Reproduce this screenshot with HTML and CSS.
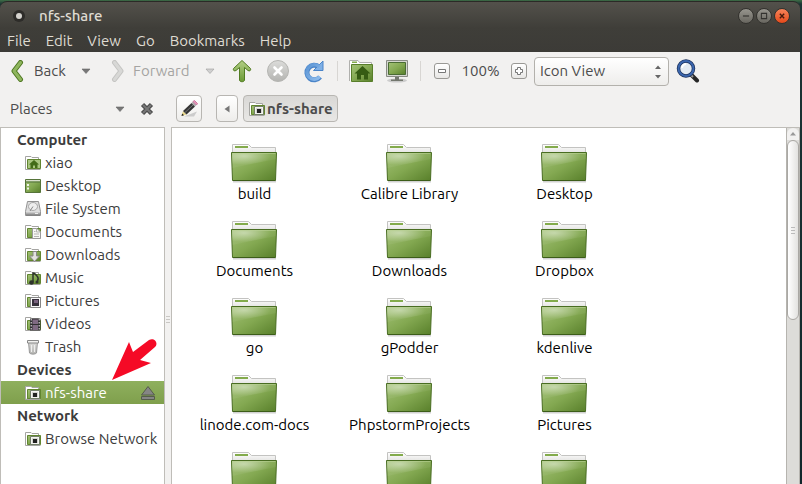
FILE: index.html
```html
<!DOCTYPE html>
<html lang="en">
<head>
<meta charset="utf-8">
<title>nfs-share</title>
<link rel="stylesheet" href="styles.css">
</head>
<body>
<svg class="defs" aria-hidden="true">
  <defs>
    <linearGradient id="green" x1="0" y1="0" x2="1" y2="1"><stop offset="0" stop-color="#a3c276"/><stop offset=".5" stop-color="#83a851"/><stop offset="1" stop-color="#587f2a"/></linearGradient>
    <linearGradient id="arrowGreen" x1="0" y1="0" x2="0" y2="1"><stop offset="0" stop-color="#b3cf86"/><stop offset="1" stop-color="#6b9a35"/></linearGradient>
    <linearGradient id="paper" x1="0" y1="0" x2="0" y2="1"><stop offset="0" stop-color="#fff"/><stop offset="1" stop-color="#e4e4e2"/></linearGradient>
    <linearGradient id="grey" x1="0" y1="0" x2="0" y2="1"><stop offset="0" stop-color="#dcdcda"/><stop offset="1" stop-color="#b4b4b1"/></linearGradient>
    <linearGradient id="blue" x1="0" y1="0" x2="1" y2="1"><stop offset="0" stop-color="#5a94d4"/><stop offset="1" stop-color="#8fbcec"/></linearGradient>
    <linearGradient id="metal" x1="0" y1="0" x2="0" y2="1"><stop offset="0" stop-color="#d5d5d5"/><stop offset="1" stop-color="#747474"/></linearGradient>
    <radialGradient id="shine" cx=".28" cy=".2" r=".6"><stop offset="0" stop-color="#fff" stop-opacity=".45"/><stop offset="1" stop-color="#fff" stop-opacity=".05"/></radialGradient>
  </defs>
  <symbol id="folder" viewBox="0 0 48 40">
    <path d="M3 38.500h43" stroke="#000" stroke-opacity=".18" stroke-width="2"/>
    <path d="M2.500 10V1.500h16l3 3h24V10z" fill="url(#paper)" stroke="#c3c3c1"/>
    <path d="M5 3h13v2H5z" fill="#83ab4c"/>
    <path d="M1.500 9.500h45l-1 28h-43z" fill="url(#green)" stroke="#496d22"/>
    <path d="M2 10h44L46 16 2 25z" fill="url(#shine)"/>
    <path d="M2.500 10.500h43" stroke="#b9d194" stroke-opacity=".6"/>
    <path d="M3 37.500h42" stroke="#3c5d19"/>
  </symbol>
  <symbol id="small-folder" viewBox="0 0 16 16">
    <path d="M.5 14.500V1.500H6l1 1h6.500V5" fill="#fff" stroke="#a5a5a2"/>
    <path d="M2.500 4.500h13v9h-13z" fill="url(#green)" stroke="#61852f"/>
    <path d="M.5 14.500h15" stroke="#a5a5a2"/>
  </symbol>
  <symbol id="home" viewBox="0 0 16 16">
    <use href="#small-folder"/><path d="M3 5h12v8H3z" fill="#a9c680"/>
    <path d="M4 9.500 9 5l5 4.500h-1.500V13H10v-2.500H8V13H5.500V9.500z" fill="#426b18"/>
  </symbol>
  <symbol id="desktop" viewBox="0 0 16 16">
    <path d="M.5 1.500h15v13H.5z" fill="url(#green)" stroke="#56743a"/>
    <path d="M1 2h14v1.500H1z" fill="#d9dfcc"/><path d="M1 4h14" stroke="#50703a"/>
    <path d="M2 6h2v2H2zM2 9.500h2v2H2z" fill="#f0f3e8"/>
  </symbol>
  <symbol id="drive" viewBox="0 0 16 16">
    <path d="M2.500.5h11l2 10v4H.5v-4z" fill="#dedede" stroke="#939393"/>
    <ellipse cx="8" cy="5.500" rx="4.500" ry="4" fill="#eee" stroke="#a9a9a9"/>
    <path d="M8 5.500 5 10" stroke="#888"/><path d="M1 11h14v3.500H1z" fill="url(#metal)"/>
    <path d="M10 12.500h3" stroke="#eee"/>
  </symbol>
  <symbol id="documents" viewBox="0 0 16 16">
    <use href="#small-folder"/><path d="M7.500 4.500H12L15.500 8v6.500h-8z" fill="#f7f7f5" stroke="#999"/>
    <path d="M11.500 4.500V8h4M9 7.500h1.500M9 10h5M9 12.500h5" fill="none" stroke="#b5b5b3"/>
  </symbol>
  <symbol id="downloads" viewBox="0 0 16 16">
    <use href="#small-folder"/><path d="M8 4.500h3.500V9h3l-5 5.500-5-5.500H8z" fill="#e3e3e1" stroke="#888"/>
  </symbol>
  <symbol id="music" viewBox="0 0 16 16">
    <use href="#small-folder"/><path d="M8 12V3c2 0 3 2 4 3s1.500 3 .5 5" fill="none" stroke="#2e342b" stroke-width="1.500"/>
    <circle cx="6.500" cy="12.500" r="2.300" fill="#2e342b"/><circle cx="12" cy="12" r="1.500" fill="#2e342b"/>
  </symbol>
  <symbol id="pictures" viewBox="0 0 16 16">
    <use href="#small-folder"/><path d="M5.500 4.500h10v10h-10z" fill="#f7f7f7" stroke="#858585"/>
    <path d="M7 6h7v7H7z" fill="#37303d"/><path d="M9 7h4v3H9z" fill="#79627f"/>
  </symbol>
  <symbol id="videos" viewBox="0 0 16 16">
    <use href="#small-folder"/><path d="M5 2.500h10.500v12H5z" fill="#302f31"/><path d="M7.500 3.500H13v4.500H7.500zM7.500 9H13v5H7.500z" fill="#806a83"/>
    <path d="M6.200 3v11M14.200 3v11" stroke="#eee" stroke-dasharray="1.500 1.500"/>
  </symbol>
  <symbol id="trash" viewBox="0 0 16 16">
    <path d="m3.500 3 1 11c1 1.500 6 1.500 7 0l1-11z" fill="url(#grey)" stroke="#999"/>
    <path d="M2.500 1.500h11v2.500h-11z" fill="#f1f1ef" stroke="#888"/>
    <path d="M6.500 6v7M9.500 6v7" stroke="#eee"/>
  </symbol>
  <symbol id="share" viewBox="0 0 16 16">
    <use href="#small-folder"/><path d="M5.500 5.500h9v8h-9z" fill="#f5f5f2" stroke="#74806a"/>
    <path d="M7 7h6v5H7z" fill="#d5d5d2"/><path d="M8 8h4v4H8z" fill="#222"/>
  </symbol>
  <symbol id="down" viewBox="0 0 10 6"><path d="M1 1h8L5 5.500z" fill="currentColor" stroke="#666" stroke-width=".6"/></symbol>
  <symbol id="chevron" viewBox="0 0 14 22"><path d="M10.500 2.500 4 11l6.500 8.500" fill="none" stroke="currentColor" stroke-width="5" stroke-linejoin="round" stroke-linecap="round"/><path d="M10.500 2.500 4 11l6.500 8.500" fill="none" stroke="var(--fill)" stroke-width="3" stroke-linejoin="round" stroke-linecap="round"/></symbol>
</svg>

<div class="window">
  <header class="chrome">
    <div class="titlebar">
      <svg class="app-dot" viewBox="0 0 14 14"><circle cx="7" cy="7" r="6" fill="#2d2c29"/><circle cx="7" cy="7" r="3" fill="#d5d3ce"/></svg>
      <h1>nfs-share</h1>
      <div class="controls">
        <button aria-label="Minimize"><svg viewBox="0 0 16 16"><path d="M4.500 8h7" stroke="#33322f" stroke-width="1.300"/></svg></button>
        <button aria-label="Maximize"><svg viewBox="0 0 16 16"><path d="M5 5h6v6H5z" fill="none" stroke="#33322f" stroke-width="1.200"/></svg></button>
        <button class="close" aria-label="Close"><svg viewBox="0 0 16 16"><path d="m5.500 5.500 5 5m0-5-5 5" stroke="#45190c" stroke-width="1.600"/></svg></button>
      </div>
    </div>
    <nav class="menubar">
      <button>File</button><button>Edit</button><button>View</button><button>Go</button><button>Bookmarks</button><button>Help</button>
    </nav>
  </header>

  <div class="toolbar">
    <button class="nav back"><svg viewBox="0 0 14 22"><use href="#chevron"/></svg>Back</button>
    <button class="drop" aria-label="Back history"><svg viewBox="0 0 10 6"><use href="#down"/></svg></button>
    <button class="nav forward" disabled><svg viewBox="0 0 14 22"><use href="#chevron"/></svg>Forward</button>
    <button class="drop muted" aria-label="Forward history" disabled><svg viewBox="0 0 10 6"><use href="#down"/></svg></button>
    <button class="tool" aria-label="Up"><svg viewBox="0 0 24 24"><path d="M12 1.500 20.500 9.500c.8 2-1 3-2.500 2l-3.500-3V21c0 2.300-5 2.300-5 0V8.500l-3.500 3c-1.500 1-3.300 0-2.500-2z" fill="url(#arrowGreen)" stroke="#527c23"/></svg></button>
    <button class="tool" aria-label="Stop"><svg viewBox="0 0 24 24"><circle cx="12" cy="12" r="10.500" fill="url(#grey)" stroke="#b5b5b2"/><path d="m8.500 8.500 7 7m0-7-7 7" stroke="#fff" stroke-width="2.600" stroke-linecap="round"/></svg></button>
    <button class="tool" aria-label="Reload"><svg viewBox="0 0 24 24"><path d="M17 8A7.300 7.300 0 1 0 18 18" fill="none" stroke="#4a84c8" stroke-width="5"/><path d="M21 2v9.500h-9.500L15 8l2.500-2.500z" fill="#7fb0e6" stroke="#4a84c8"/><path d="M17.500 8A7.300 7.300 0 1 0 17.700 17.700" fill="none" stroke="url(#blue)" stroke-width="3.400"/></svg></button>
    <span class="separator"></span>
    <button class="tool" aria-label="Home"><svg viewBox="0 0 24 24"><path d="M.5 22V1.500H9l1.500 2h12V8" fill="#fff" stroke="#b0b0ad"/><path d="M3 2.500h5v1.500H3z" fill="#83ab4c"/><path d="M2.500 5.500h21v17h-21z" fill="url(#green)" stroke="#587e2a"/><path d="m5.500 14.500 8-7.500 8 7.500h-2.500v6h-4v-4.500h-3v4.500H8v-6z" fill="#365c13"/></svg></button>
    <button class="tool" aria-label="Computer"><svg viewBox="0 0 24 24"><ellipse cx="12" cy="21.500" rx="10" ry="2" fill="#ccc"/><path d="M1.500 1.500h21v16h-21z" fill="#d5d7d0" stroke="#888b84"/><path d="M3.500 3.500h17v12h-17z" fill="url(#green)" stroke="#4a6b34"/><path d="M10 18h4v2.500h4v1.500H6v-1.500h4z" fill="#73776e"/></svg></button>
    <span class="separator"></span>
    <button class="zoom" aria-label="Zoom out"><svg viewBox="0 0 12 12"><path d="M2.500 4.500h7v3h-7z" fill="#fff" stroke="#777"/></svg></button>
    <output class="level">100%</output>
    <button class="zoom" aria-label="Zoom in"><svg viewBox="0 0 12 12"><path d="M4.500 2.500h3v2h2v3h-2v2h-3v-2h-2v-3h2z" fill="#fff" stroke="#777"/></svg></button>
    <label class="view"><select aria-label="View mode"><option>Icon View</option><option>List View</option><option>Compact View</option></select><svg viewBox="0 0 8 14"><path d="m1 4 3-3.500L7 4zM1 10h6l-3 3.500z" fill="#666"/></svg></label>
    <button class="tool" aria-label="Search"><svg viewBox="0 0 24 24"><path d="m15.500 16 5.500 5.500" stroke="#262626" stroke-width="4" stroke-linecap="round"/><path d="m14 15 3 3" stroke="#999" stroke-width="2"/><circle cx="10" cy="9.500" r="7.500" fill="#e4ebf2" stroke="#1c315b" stroke-width="3.500"/><circle cx="10" cy="9.500" r="7.500" fill="none" stroke="#3b66ae" stroke-width="2"/><path d="M6 9a4.500 4.500 0 0 1 4-4" fill="none" stroke="#fff" stroke-width="2"/></svg></button>
  </div>

  <div class="workspace">
    <aside class="side">
      <div class="side-head">
        <button class="places">Places<svg viewBox="0 0 10 6"><use href="#down"/></svg></button>
        <button class="shut" aria-label="Close side pane"><svg viewBox="0 0 14 14"><path d="m2.500 2.500 9 9m0-9-9 9" stroke="#4c4c4c" stroke-width="4.500"/><path d="m3 3 8 8m0-8-8 8" stroke="#777" stroke-width="2"/></svg></button>
      </div>
      <nav class="tree">
        <h2>Computer</h2>
        <a href="#"><svg><use href="#home"/></svg>xiao</a>
        <a href="#"><svg><use href="#desktop"/></svg>Desktop</a>
        <a href="#"><svg><use href="#drive"/></svg>File System</a>
        <a href="#"><svg><use href="#documents"/></svg>Documents</a>
        <a href="#"><svg><use href="#downloads"/></svg>Downloads</a>
        <a href="#"><svg><use href="#music"/></svg>Music</a>
        <a href="#"><svg><use href="#pictures"/></svg>Pictures</a>
        <a href="#"><svg><use href="#videos"/></svg>Videos</a>
        <a href="#"><svg><use href="#trash"/></svg>Trash</a>
        <h2>Devices</h2>
        <a href="#" class="selected"><svg><use href="#share"/></svg>nfs-share
          <svg class="eject" viewBox="0 0 16 16"><path d="M8 1.500 14.500 10h-13zM1.500 11.500h13v3h-13z" fill="#858585" stroke="#555c4b"/></svg>
          <svg class="pointer" viewBox="0 0 48 44"><path d="m1 42 17-38 4 10L38 2c5-3 10 3 6 7L29 22l11 3z" fill="#f50a26"/></svg>
        </a>
        <h2>Network</h2>
        <a href="#"><svg><use href="#share"/></svg>Browse Network</a>
      </nav>
    </aside>
    <div class="splitter"></div>
    <main class="main">
      <div class="pathbar">
        <button class="path edit" aria-label="Edit location"><svg viewBox="0 0 18 18"><path d="M4 16.500h10l3-5z" fill="#ccc"/><path d="m1.500 16 1.500-5 3.500 3.500z" fill="#e8d78b"/><path d="m1.500 16 .7-2.500 1.800 1.800z" fill="#222"/><path d="M3 11 11.500 3 15 6.500 6.500 14.500z" fill="#353535"/><path d="m5 12.500 8-7.500" stroke="#777"/><path d="m11.500 3 1.500-1.500 3.500 3.500L15 6.500z" fill="#aaa"/><path d="m13 1.500 1.500-1 3 3-1 1.500z" fill="#e996bb" stroke="#c979a0"/></svg></button>
        <button class="path prev" aria-label="Parent folders"><svg viewBox="0 0 6 8"><path d="M5.500.5v7L.5 4z" fill="#777"/></svg></button>
        <button class="path here"><svg viewBox="0 0 16 16"><use href="#share"/></svg>nfs-share</button>
      </div>
      <div class="view-pane">
        <div class="files">
          <a href="#"><svg><use href="#folder"/></svg>build</a>
          <a href="#"><svg><use href="#folder"/></svg>Calibre Library</a>
          <a href="#"><svg><use href="#folder"/></svg>Desktop</a>
          <a href="#"><svg><use href="#folder"/></svg>Documents</a>
          <a href="#"><svg><use href="#folder"/></svg>Downloads</a>
          <a href="#"><svg><use href="#folder"/></svg>Dropbox</a>
          <a href="#"><svg><use href="#folder"/></svg>go</a>
          <a href="#"><svg><use href="#folder"/></svg>gPodder</a>
          <a href="#"><svg><use href="#folder"/></svg>kdenlive</a>
          <a href="#"><svg><use href="#folder"/></svg>linode.com-docs</a>
          <a href="#"><svg><use href="#folder"/></svg>PhpstormProjects</a>
          <a href="#"><svg><use href="#folder"/></svg>Pictures</a>
          <a href="#"><svg><use href="#folder"/></svg></a>
          <a href="#"><svg><use href="#folder"/></svg></a>
          <a href="#"><svg><use href="#folder"/></svg></a>
        </div>
        <div class="scrollbar">
          <span class="step"><svg viewBox="0 0 6 4"><path d="M0 3.500 3 0l3 3.500z" fill="#999"/></svg></span>
          <span class="thumb"></span>
        </div>
      </div>
    </main>
  </div>
</div>
</body>
</html>
```
FILE: styles.css
```css
* { box-sizing: border-box; }

body {
  margin: 0;
  height: 100vh;
  overflow: hidden;
  background: linear-gradient(#3e6d46, #1c3434 4px, #10272b);
  font: 15px/20px "Ubuntu", "Noto Sans", sans-serif;
  color: #3c3c3c;
}

svg { display: block; flex: none; }
.defs { position: absolute; width: 0; height: 0; }

button {
  display: flex;
  align-items: center;
  padding: 0;
  border: 0;
  background: none;
  font: inherit;
  color: inherit;
}

a { color: inherit; text-decoration: none; }

.window {
  display: flex;
  flex-direction: column;
  height: 100vh;
  margin-right: 2px;
  padding-top: 1px;
}

/* Title and menus */
.chrome {
  flex: none;
  border-top: 1px solid #2b2a27;
  border-radius: 7px 7px 0 0;
  background: linear-gradient(#53514b, #3f3e39 26px, #3c3b37);
  color: #dfdbd2;
}

.titlebar {
  display: flex;
  align-items: center;
  height: 27px;
  padding: 0 10px 0 12px;
}

.app-dot { width: 14px; height: 14px; }
.titlebar h1 { margin: 0 0 0 13px; font-size: 15px; font-weight: 500; }
.controls { display: flex; gap: 2px; margin-left: auto; }

.controls button {
  width: 16px;
  height: 16px;
  border: 1px solid #33322e;
  border-radius: 50%;
  background: linear-gradient(#97958e, #68665f);
}

.controls button.close { background: linear-gradient(#f7845a, #e4491a); }
.controls svg { width: 14px; height: 14px; }

.menubar {
  display: flex;
  gap: 15px;
  height: 23px;
  padding: 0 7px;
}

/* Toolbar */
.toolbar {
  display: flex;
  flex: none;
  align-items: center;
  height: 38px;
  padding-left: 10px;
  background: #f2f1f0;
  color: #4c4c4c;
}

.nav { gap: 10px; }
.nav svg { width: 14px; height: 22px; }
.back { --fill: #8fb65e; width: 65px; }
.back svg { color: #4f7822; }
.forward { --fill: #d8d8d6; width: 88px; gap: 8px; color: #a5a4a2; margin-left: 14px; }
.forward svg { color: #c4c4c2; transform: scaleX(-1); }
.drop { justify-content: center; width: 22px; color: #777; }
.drop svg { width: 10px; height: 6px; }
.muted { color: #bbb; opacity: .6; }
.tool { justify-content: center; width: 36px; }
.tool svg { width: 24px; height: 24px; }
.muted + .tool { margin-left: 3px; }

.separator {
  width: 1px;
  height: 20px;
  margin: 0 5px;
  background: #d8d6d3;
}

.zoom {
  justify-content: center;
  width: 16px;
  height: 16px;
  border: 1px solid #999894;
  border-radius: 3px;
  background: linear-gradient(#fff, #e8e7e5);
}

.separator + .zoom { margin-left: 8px; }
.zoom svg { width: 12px; height: 12px; }
.level { width: 61px; text-align: center; }
.view { position: relative; margin: 0 1px 0 7px; }

.view select {
  display: block;
  width: 135px;
  height: 29px;
  padding: 0 5px;
  appearance: none;
  border: 1px solid #b3b1ac;
  border-radius: 4px;
  background: linear-gradient(#fff, #eeedeb);
  font: inherit;
  color: inherit;
}

.view svg {
  position: absolute;
  top: 8px;
  right: 7px;
  width: 8px;
  height: 14px;
  pointer-events: none;
}

/* Panes */
.workspace {
  display: flex;
  flex: 1;
  min-height: 0;
  background: #f2f1f0;
}

.side { display: flex; flex: none; flex-direction: column; width: 165px; }

.side-head {
  display: flex;
  flex: none;
  align-items: center;
  height: 37px;
  padding: 0 11px 0 10px;
}

.places { flex: 1; justify-content: space-between; color: #4c4c4c; }
.places svg { width: 10px; height: 6px; color: #777; }
.shut { margin-left: 15px; }
.shut svg { width: 14px; height: 14px; }

.tree {
  flex: 1;
  border: solid #bfbdb8;
  border-width: 1px 1px 0;
  background: #fff;
}

.tree h2 {
  height: 23px;
  margin: 0;
  padding-left: 16px;
  font-size: 15px;
  line-height: 24px;
}

.tree a {
  position: relative;
  display: flex;
  align-items: center;
  gap: 4px;
  height: 23px;
  padding-left: 24px;
  white-space: nowrap;
}

.tree svg { width: 16px; height: 16px; }

.tree .selected {
  background: linear-gradient(#8fb05e, #7f9f4c);
  color: #fff;
}

.tree .eject { margin: 0 8px 0 auto; }

.tree .pointer {
  position: absolute;
  left: 110px;
  bottom: 22px;
  width: 48px;
  height: 44px;
}

.splitter {
  flex: none;
  width: 6px;
  margin-top: 37px;
  background: repeating-linear-gradient(#c9c7c4 0 1px, transparent 1px 3px) center 189px / 4px 8px no-repeat;
}

.main { display: flex; flex: 1; flex-direction: column; min-width: 0; }

.pathbar {
  display: flex;
  flex: none;
  align-items: center;
  height: 37px;
  padding-left: 5px;
}

.path {
  justify-content: center;
  height: 27px;
  border: 1px solid #b8b6b2;
  border-radius: 4px;
  background: linear-gradient(#fff, #eeedeb);
}

.edit { width: 26px; }
.edit svg { width: 18px; height: 18px; }
.prev { width: 22px; margin: 0 5px 0 14px; }
.prev svg { width: 6px; height: 8px; }

.here {
  gap: 2px;
  padding: 0 4px 0 5px;
  background: linear-gradient(#d9d8d6, #e8e7e5);
  color: #4c4c4c;
  font-weight: 700;
}

.here svg { width: 16px; height: 16px; }

.view-pane {
  display: flex;
  flex: 1;
  min-height: 0;
  border: solid #bfbdb8;
  border-width: 1px 0 0 1px;
  background: #fff;
}

.files {
  display: grid;
  flex: 1;
  grid-template-columns: repeat(auto-fill, 155px);
  grid-auto-rows: 77px;
  align-content: start;
  padding: 15px 0 0 5px;
  overflow: hidden;
  color: #000;
}

.files a { display: flex; flex-direction: column; align-items: center; gap: 1px; }
.files svg { width: 48px; height: 40px; margin-right: 1px; }

.scrollbar {
  display: flex;
  flex: none;
  flex-direction: column;
  width: 14px;
  border: solid #b6b4af;
  border-width: 0 1px;
  background: #dddcd9;
}

.step {
  display: flex;
  flex: none;
  align-items: center;
  justify-content: center;
  height: 12px;
  border-radius: 6px 6px 0 0;
  background: #f2f1f0;
}

.step svg { width: 6px; height: 4px; }

.thumb {
  height: 180px;
  border: 1px solid #aaa8a4;
  border-radius: 6px;
  background:
    repeating-linear-gradient(#bbb 0 1px, transparent 1px 3px) center / 4px 7px no-repeat,
    linear-gradient(90deg, #fff, #e3e2e0);
}
```
